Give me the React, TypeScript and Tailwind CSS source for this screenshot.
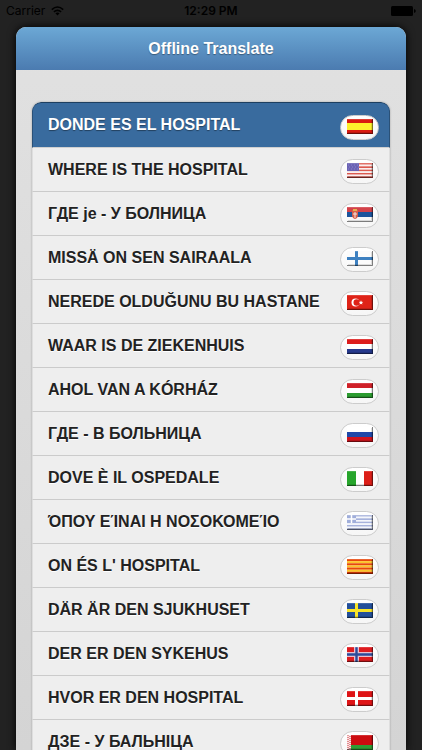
import type { ReactNode } from "react";

type Entry = { lang: string; text: string; flag: ReactNode };

function stripes(colors: string[], total = 15) {
  const h = total / colors.length;
  return colors.map((c, i) => <rect key={i} x="0" y={i * h} width="26" height={h} fill={c} />);
}

function Nordic({ field, cross, inner }: { field: string; cross: string; inner?: string }) {
  return (
    <>
      <rect width="26" height="15" fill={field} />
      <path d="M9.5 0V15M0 7.5H26" stroke={cross} strokeWidth={inner ? 5 : 3} />
      {inner && <path d="M9.5 0V15M0 7.5H26" stroke={inner} strokeWidth="2.4" />}
    </>
  );
}

const entries: Entry[] = [
  {
    lang: "Spanish",
    text: "DONDE ES EL HOSPITAL",
    flag: (
      <>
        <rect width="26" height="15" fill="#d91a10" />
        <rect y="4" width="26" height="7" fill="#fdf02c" />
      </>
    ),
  },
  {
    lang: "English",
    text: "WHERE IS THE HOSPITAL",
    flag: (
      <>
        {stripes(["#dc5a50", "#fbeeee", "#dc5a50", "#fbeeee", "#dc5a50", "#fbeeee", "#dc5a50", "#fbeeee", "#cf4a42"])}
        <rect width="12" height="8" fill="#6a62b4" />
        <path d="M1 2H12M2 4H12M1 6H12" stroke="#8a82c8" strokeWidth="1" strokeDasharray="1 2" />
      </>
    ),
  },
  {
    lang: "Serbian",
    text: "ГДЕ je - У БОЛНИЦА",
    flag: (
      <>
        {stripes(["#d3424a", "#1c549c", "#f8f8f8"])}
        <path d="M5 3H11V8Q11 11 8 12Q5 11 5 8Z" fill="#d8604a" />
        <path d="M6 2H10V4H6Z" fill="#e8b050" />
        <path d="M8 5V11M6 7H10" stroke="#f4e6e0" strokeWidth="1" />
      </>
    ),
  },
  { lang: "Finnish", text: "MISSÄ ON SEN SAIRAALA", flag: <Nordic field="#fbfbfb" cross="#3d80c0" /> },
  {
    lang: "Turkish",
    text: "NEREDE OLDUĞUNU BU HASTANE",
    flag: (
      <>
        <rect width="26" height="15" fill="#df2318" />
        <circle cx="8.5" cy="7.5" r="4" fill="#fff" />
        <circle cx="9.7" cy="7.5" r="3.2" fill="#df2318" />
        <path d="M14 5.3L14.6 6.8L16.2 7L15 8L15.4 9.6L14 8.7L12.6 9.6L13 8L11.8 7L13.4 6.8Z" fill="#fff" />
      </>
    ),
  },
  { lang: "Dutch", text: "WAAR IS DE ZIEKENHUIS", flag: stripes(["#dc1c1c", "#ffffff", "#26398c"]) },
  { lang: "Hungarian", text: "AHOL VAN A KÓRHÁZ", flag: stripes(["#cf2028", "#ffffff", "#2c9c30"]) },
  { lang: "Russian", text: "ГДЕ - В БОЛЬНИЦА", flag: stripes(["#ffffff", "#2048a8", "#d0141c"]) },
  {
    lang: "Italian",
    text: "DOVE È IL OSPEDALE",
    flag: (
      <>
        <rect width="26" height="15" fill="#fff" />
        <rect width="9" height="15" fill="#27a52c" />
        <rect x="17" width="9" height="15" fill="#dc1e18" />
      </>
    ),
  },
  {
    lang: "Greek",
    text: "ΌΠΟΥ ΕΊΝΑΙ Η ΝΟΣΟΚΟΜΕΊΟ",
    flag: (
      <>
        {stripes(["#a6b2dc", "#f4f6fc", "#a6b2dc", "#f4f6fc", "#a6b2dc", "#f4f6fc", "#a6b2dc", "#f4f6fc", "#98a4cc"])}
        <rect width="9" height="8" fill="#a0aeda" />
        <path d="M4.5 0V8M0 4H9" stroke="#fff" strokeWidth="1.5" />
      </>
    ),
  },
  {
    lang: "Catalan",
    text: "ON ÉS L' HOSPITAL",
    flag: stripes(["#e8480c", "#fcc428", "#e8480c", "#fcc428", "#e8480c", "#fcc428", "#e03808"]),
  },
  { lang: "Swedish", text: "DÄR ÄR DEN SJUKHUSET", flag: <Nordic field="#24509a" cross="#f8e428" /> },
  {
    lang: "Norwegian",
    text: "DER ER DEN SYKEHUS",
    flag: <Nordic field="#de1c20" cross="#e8c0d0" inner="#2c4c9c" />,
  },
  { lang: "Danish", text: "HVOR ER DEN HOSPITAL", flag: <Nordic field="#de1416" cross="#ffffff" /> },
  {
    lang: "Belarusian",
    text: "ДЗЕ - У БАЛЬНІЦА",
    flag: (
      <>
        <rect width="26" height="15" fill="#cc0c10" />
        <rect y="10" width="26" height="5" fill="#2e9c34" />
        <rect width="4" height="15" fill="#f8e4e4" />
        <path d="M1 0V15M3 1V15" stroke="#d03038" strokeWidth="1" strokeDasharray="1 1" />
      </>
    ),
  },
];

function Flag({ children }: { children: ReactNode }) {
  return (
    <svg width="26" height="15" viewBox="0 0 26 15" aria-hidden="true">
      {children}
      <path d="M0 .5H26" stroke="#fff" strokeOpacity=".15" />
      <path d="M0 14.5H25.5V0" fill="none" stroke="#000" strokeOpacity=".5" />
      <path d="M1 13.5H24.5V1" fill="none" stroke="#000" strokeOpacity=".12" />
    </svg>
  );
}

function StatusBar() {
  return (
    <div className="grid h-[27px] shrink-0 grid-cols-3 items-start px-1.5 pt-1 font-['Inter',sans-serif] text-xs leading-[14px] text-black">
      <div className="flex items-center gap-1.5">
        <span>Carrier</span>
        <svg width="13" height="10" viewBox="0 0 13 10" aria-hidden="true" fill="none" stroke="#000" strokeWidth="1.6">
          <path d="M.8 3.6Q6.5 -1.6 12.2 3.6" />
          <path d="M2.9 5.9Q6.5 2.7 10.1 5.9" />
          <path d="M4.4 7.2Q6.5 5.6 8.6 7.2L6.5 9.4Z" fill="#000" stroke="none" />
        </svg>
      </div>
      <span className="text-center font-semibold">12:29 PM</span>
      <div className="flex h-[14px] items-center justify-end">
        <svg width="25" height="10" viewBox="0 0 25 10" aria-hidden="true">
          <rect width="22" height="10" rx="1.5" />
          <path d="M23 3Q24.8 3.4 24.8 5T23 7Z" />
        </svg>
      </div>
    </div>
  );
}

export default function App() {
  return (
    <div className="flex h-screen flex-col overflow-hidden bg-[#222222] font-['Liberation_Sans',Arial,sans-serif]">
      <StatusBar />
      <main className="mx-4 flex min-h-0 flex-1 flex-col overflow-hidden rounded-t-[10px] bg-linear-to-b from-[#e1e1e1] to-[#d4d4d4] shadow-[0_0_8px_#000000]">
        <header className="flex h-[43px] shrink-0 items-center justify-center bg-linear-to-b from-[#6ca8d5] to-[#4b7bb0]">
          <h1 className="text-base font-bold text-white [text-shadow:0_1px_1px_rgba(0,0,0,0.35)]">Offline Translate</h1>
        </header>
        <ul className="mx-4 mt-8 shrink-0 overflow-hidden rounded-t-[9px] shadow-[0_0_2px_#999999]">
          {entries.map((e, i) => (
            <li key={e.lang}>
              <button
                type="button"
                aria-label={`${e.lang}: ${e.text}`}
                className={
                  i === 0
                    ? "flex h-[46px] w-full items-center justify-between rounded-t-[9px] border border-b-[#d0d0d0] border-x-[#2a5178] border-t-[#1d3f60] bg-[#396b9e] pr-2.5 pl-[15px] text-left text-white [text-shadow:0_1px_1px_rgba(0,0,0,0.4)]"
                    : "flex h-11 w-full items-center justify-between border border-t-0 border-b-[#cbcbcb] border-x-[#dedede] bg-[#eeeeee] pr-2.5 pl-[15px] text-left text-[#222222] [text-shadow:0_1px_0_#ffffff]"
                }
              >
                <span className="text-base font-bold whitespace-nowrap">{e.text}</span>
                <span className="mt-1 flex h-[25px] w-[39px] shrink-0 justify-center rounded-full border border-[#cccccc] bg-linear-to-b from-white to-[#f6f6f6] pt-[3px]">
                  <Flag>{e.flag}</Flag>
                </span>
              </button>
            </li>
          ))}
        </ul>
      </main>
    </div>
  );
}
